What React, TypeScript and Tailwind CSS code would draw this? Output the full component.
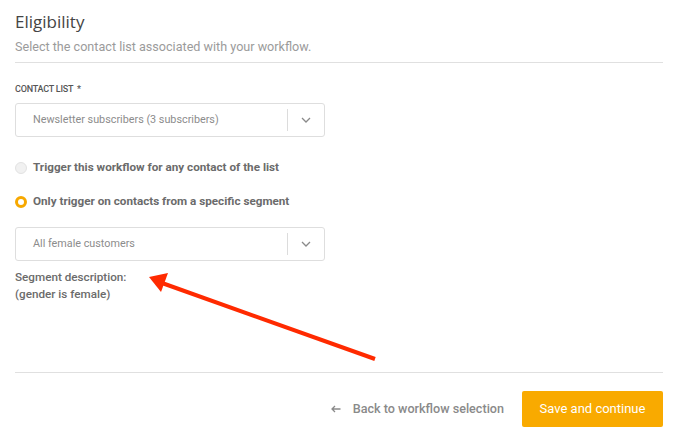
import React from 'react';

const Chevron = () => (
  <svg width="10" height="6" viewBox="0 0 10 6" fill="none">
    <path d="M1 1l4 4 4-4" stroke="#8a8a8a" strokeWidth="1.3" />
  </svg>
);

const SelectBox = ({ value }: { value: string }) => (
  <div className="flex h-[34px] w-[310px] items-center rounded-[3px] border border-[#dedede] bg-white">
    <span className="flex-1 pl-[17px] text-[10.8px] text-[#8c8c8c]">{value}</span>
    <div className="h-[22px] w-px bg-[#dcdcdc]" />
    <div className="flex w-[36px] items-center justify-center">
      <Chevron />
    </div>
  </div>
);

export default function App() {
  return (
    <div
      className="relative h-[439px] w-[673px] overflow-hidden bg-white pl-[15px] pr-[10px]"
      style={{ fontFamily: 'Roboto, "Liberation Sans", sans-serif' }}
    >
      {/* header */}
      <div className="border-b border-[#e0e0e0] pt-[11px] pb-[6px]">
        <h1
          className="text-[17px] leading-[22px] font-medium text-[#444]"
          style={{ fontFamily: '"Open Sans", Roboto, sans-serif' }}
        >
          Eligibility
        </h1>
        <p className="mt-[5px] text-[12.6px] leading-[18px] text-[#9b9b9b]">
          Select the contact list associated with your workflow.
        </p>
      </div>

      {/* contact list */}
      <div className="mt-[20px] text-[9px] leading-[12px] font-medium tracking-tight text-[#555]">
        CONTACT LIST <span className="ml-[2px]">*</span>
      </div>
      <div className="mt-[8px]">
        <SelectBox value="Newsletter subscribers (3 subscribers)" />
      </div>

      {/* radios */}
      <div className="mt-[23px] flex h-[16px] items-center gap-[6px]">
        <span className="h-[12px] w-[12px] rounded-full border border-[#e2e2e2] bg-[#f1f1f1]" />
        <span className="text-[11.7px] font-bold text-[#6b6b6b]">
          Trigger this workflow for any contact of the list
        </span>
      </div>
      <div className="mt-[18px] flex h-[16px] items-center gap-[6px]">
        <span className="h-[12px] w-[12px] rounded-full border-[3px] border-[#f7a800] bg-white" />
        <span className="text-[11.7px] font-bold text-[#6b6b6b]">
          Only trigger on contacts from a specific segment
        </span>
      </div>
      <div className="mt-[17px]">
        <SelectBox value="All female customers" />
      </div>

      <div className="mt-[8px] text-[11.7px] leading-[17px] font-medium text-[#6b6b6b]">
        <div>Segment description:</div>
        <div>(gender is female)</div>
      </div>

      {/* footer */}
      <div className="mt-[69px] flex items-center justify-end border-t border-[#e0e0e0] pt-[18px]">
        <button className="mr-[18px] flex items-center gap-[12px] text-[12.6px] font-medium text-[#8a8a8a]">
          <svg width="10" height="8" viewBox="0 0 10 8" fill="none">
            <path d="M9.5 4H1M4 1L1 4l3 3" stroke="#8a8a8a" strokeWidth="1.3" />
          </svg>
          Back to workflow selection
        </button>
        <button className="h-[36px] w-[141px] rounded-[2px] bg-[#f9aa00] text-[13px] text-white">
          Save and continue
        </button>
      </div>

      {/* annotation arrow */}
      <svg className="pointer-events-none absolute left-0 top-0" width="673" height="439">
        <line x1="375" y1="359" x2="162" y2="283" stroke="#ff2a00" strokeWidth="4" />
        <polygon points="149,277 168,273 161,292" fill="#ff2a00" />
      </svg>
    </div>
  );
}
